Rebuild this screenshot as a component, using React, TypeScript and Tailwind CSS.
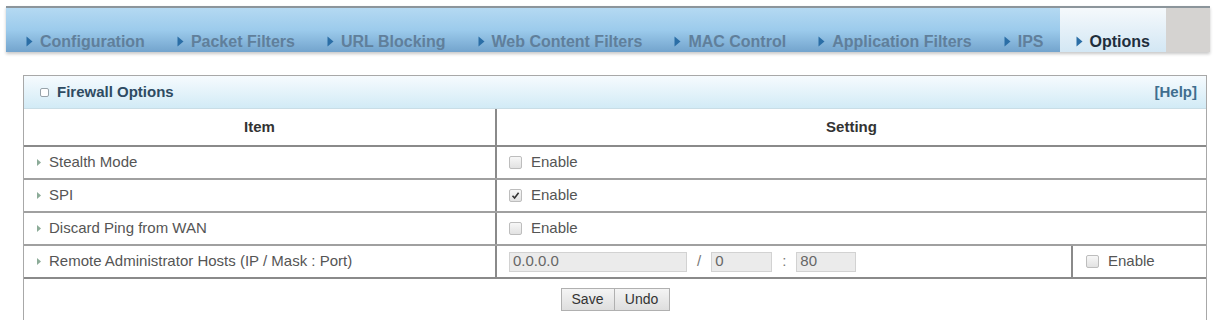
import React from "react";

const tabs = [
  "Configuration",
  "Packet Filters",
  "URL Blocking",
  "Web Content Filters",
  "MAC Control",
  "Application Filters",
  "IPS",
];

const rows = ["Stealth Mode", "SPI", "Discard Ping from WAN"];

function TabArrow() {
  return (
    <svg width="7" height="11" viewBox="0 0 7 11" className="mr-[7px] mb-[2px] text-[#2b6ea6]">
      <path d="M0.5 0.5 L6.5 5.5 L0.5 10.5 Z" fill="currentColor" />
    </svg>
  );
}

function Bullet() {
  return (
    <svg width="4" height="7" viewBox="0 0 4 7" className="mr-[8px] text-[#8cab98]">
      <path d="M0 0 L4 3.5 L0 7 Z" fill="currentColor" />
    </svg>
  );
}

function Check({ checked }: { checked?: boolean }) {
  return (
    <span className="flex h-[13px] w-[13px] items-center justify-center rounded-[2px] border border-[#bdbdbd] bg-gradient-to-b from-[#f7f7f7] to-[#e2e2e2]">
      {checked && (
        <svg width="9" height="9" viewBox="0 0 9 9">
          <path d="M1.5 4.8 L3.6 7 L7.6 1.8" stroke="#333" strokeWidth="1.6" fill="none" />
        </svg>
      )}
    </span>
  );
}

function Enable({ checked }: { checked?: boolean }) {
  return (
    <div className="flex items-center gap-[9px]">
      <Check checked={checked} />
      <span>Enable</span>
    </div>
  );
}

export default function App() {
  return (
    <div className="h-[320px] w-[1215px] overflow-hidden bg-white font-['Liberation_Sans',Arial,sans-serif]">
      <div className="pl-[6px] pr-[5px] pt-[6px]">
        <div className="flex h-[46px] border-t-2 border-[#8c959b] shadow-[0_2px_3px_rgba(0,0,0,0.22)]">
          <div className="flex items-end bg-gradient-to-b from-[#b4d9f2] via-[#9ccbec] to-[#73a4cd] pb-[1px] pl-[4px]">
            {tabs.map((t) => (
              <div key={t} className="flex items-center px-[16px] text-[16px] font-bold leading-[18px] text-[#607f9b]">
                <TabArrow />
                {t}
              </div>
            ))}
          </div>
          <div className="flex items-end bg-gradient-to-b from-[#f5f9fc] to-[#d3e7f4] px-[16px] pb-[1px]">
            <div className="flex items-center text-[16px] font-bold leading-[18px] text-[#1f2e3c]">
              <TabArrow />
              Options
            </div>
          </div>
          <div className="flex-1 bg-[#d5d3d1]" />
        </div>
      </div>

      <div className="ml-[23px] mt-[23px] w-[1184px] border border-[#a8a8a8] text-[15px] text-[#555]">
        <div className="flex h-[33px] items-center justify-between border-b border-[#c9dde6] bg-gradient-to-b from-[#f6fbfe] to-[#d2ebf6] pl-[16px] pr-[9px] font-bold">
          <div className="flex items-center gap-[8px] text-[#2e4b62]">
            <span className="h-[9px] w-[9px] rounded-[2px] border border-[#98a3aa] bg-white" />
            Firewall Options
          </div>
          <span className="text-[#3f6e8e]">[Help]</span>
        </div>

        <div className="flex h-[38px] border-b-2 border-[#8a8a8a] font-bold text-[#333]">
          <div className="flex w-[473px] items-center justify-center border-r-2 border-[#8a8a8a]">Item</div>
          <div className="flex flex-1 items-center justify-center">Setting</div>
        </div>

        {rows.map((r, i) => (
          <div key={r} className="flex h-[33px] border-b-2 border-[#a0a0a0]">
            <div className="flex w-[473px] items-center border-r-2 border-[#8a8a8a] pl-[13px]">
              <Bullet />
              {r}
            </div>
            <div className="flex flex-1 items-center pl-[12px]">
              <Enable checked={i === 1} />
            </div>
          </div>
        ))}

        <div className="flex h-[33px] border-b-2 border-[#8a8a8a]">
          <div className="flex w-[473px] items-center border-r-2 border-[#8a8a8a] pl-[13px]">
            <Bullet />
            Remote Administrator Hosts (IP / Mask : Port)
          </div>
          <div className="flex w-[576px] items-center border-r-2 border-[#8a8a8a] pl-[12px] text-[#777]">
            <input readOnly value="0.0.0.0" className="h-[20px] w-[178px] border border-[#d2d2d2] bg-[#ebebeb] px-[3px] text-[15px] text-[#666] outline-none" />
            <span className="mx-[10px]">/</span>
            <input readOnly value="0" className="h-[20px] w-[61px] border border-[#d2d2d2] bg-[#ebebeb] px-[3px] text-[15px] text-[#666] outline-none" />
            <span className="mx-[10px]">:</span>
            <input readOnly value="80" className="h-[20px] w-[60px] border border-[#d2d2d2] bg-[#ebebeb] px-[3px] text-[15px] text-[#666] outline-none" />
          </div>
          <div className="flex flex-1 items-center pl-[13px]">
            <Enable />
          </div>
        </div>

        <div className="flex h-[60px] justify-center pt-[9px]">
          <div className="flex h-[23px]">
            <button className="w-[54px] border border-[#b0b0b0] bg-gradient-to-b from-[#f4f4f4] to-[#dedede] text-[14px] text-[#333]">Save</button>
            <button className="w-[55px] border border-l-0 border-[#b0b0b0] bg-gradient-to-b from-[#f4f4f4] to-[#dedede] text-[14px] text-[#333]">Undo</button>
          </div>
        </div>
      </div>
    </div>
  );
}
